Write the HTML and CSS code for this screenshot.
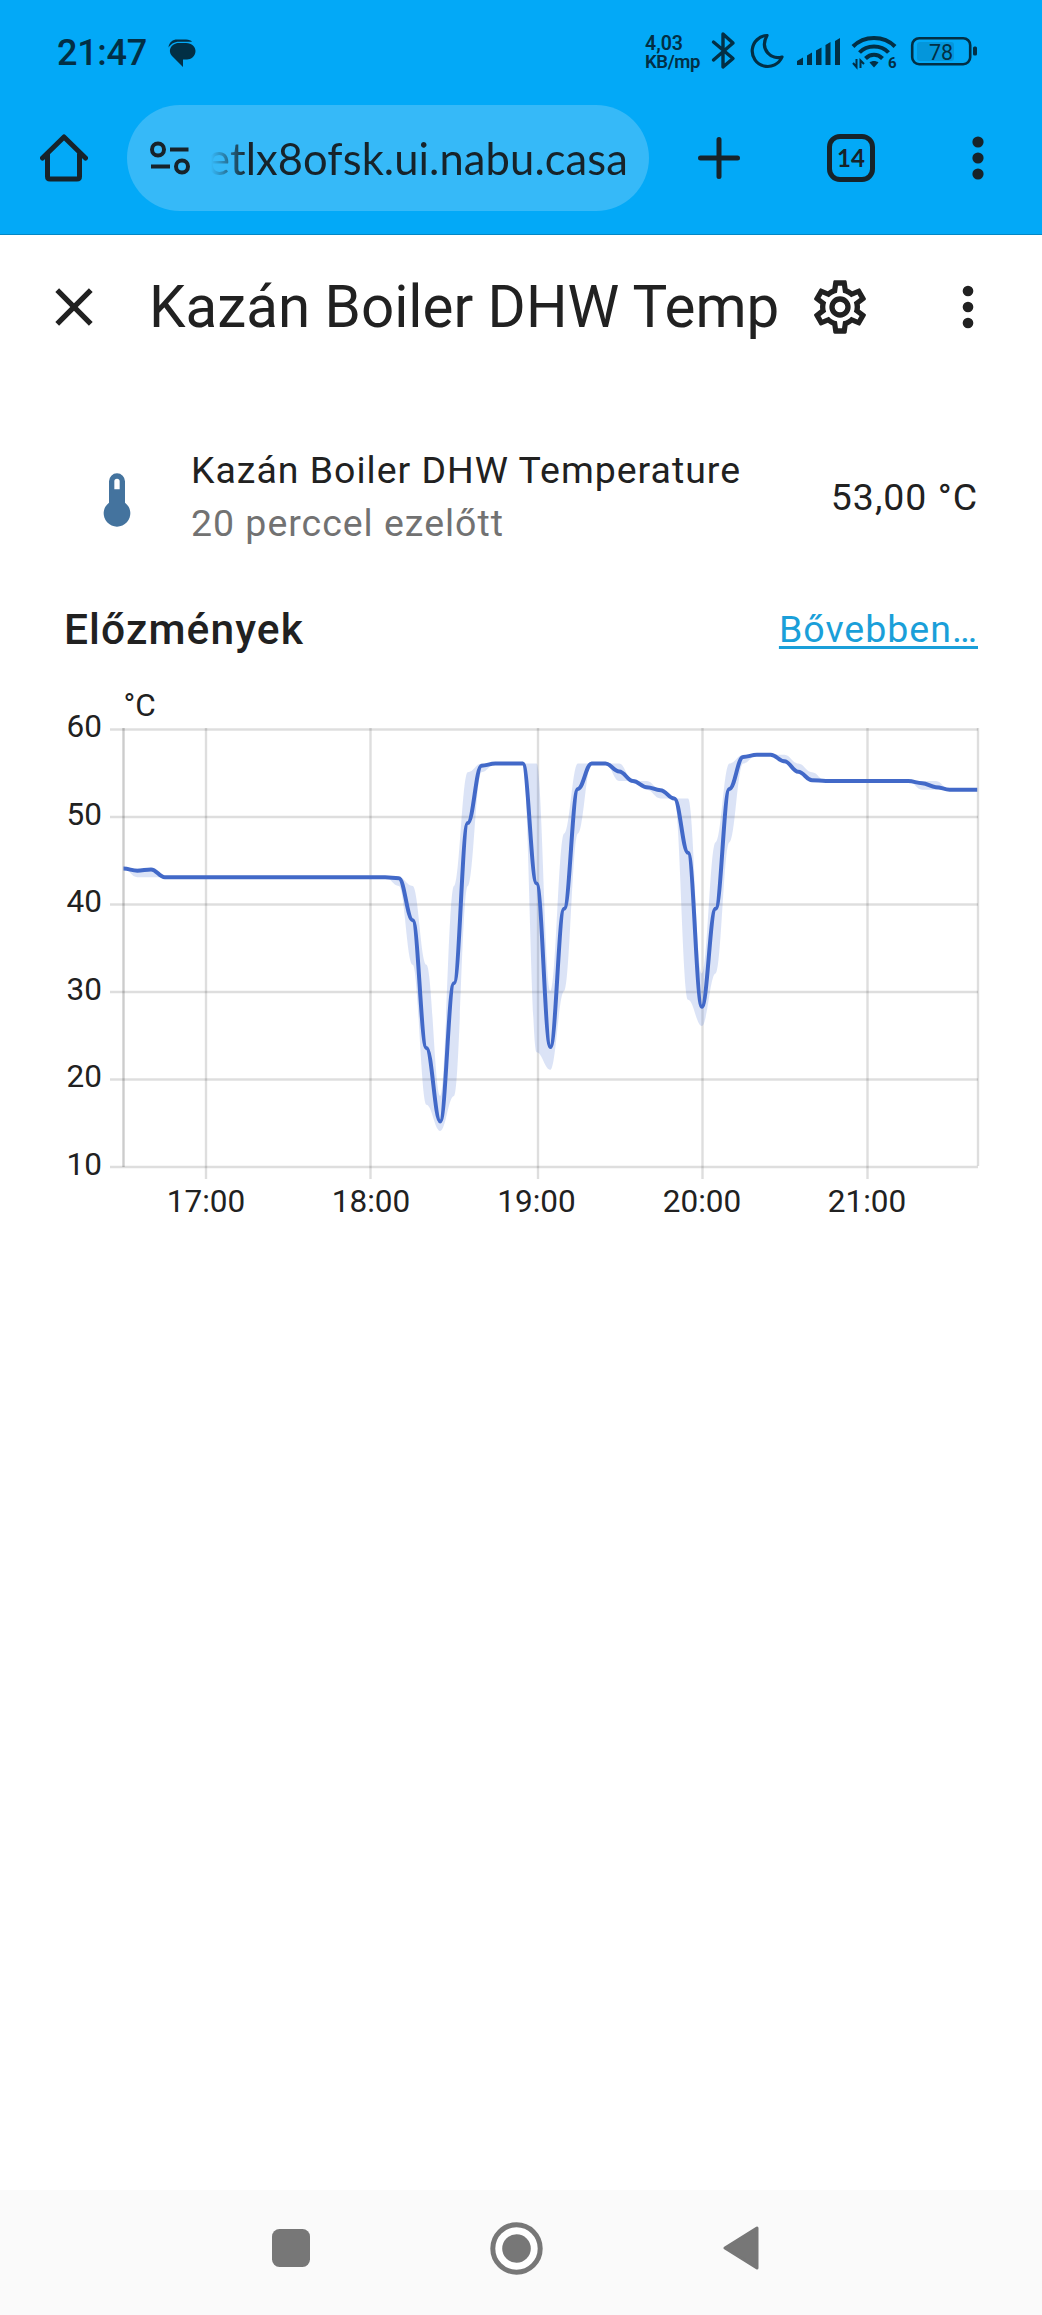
FILE: index.html
```
<!DOCTYPE html>
<html lang="hu">
<head>
    <meta charset="UTF-8">
    <meta name="viewport" content="width=device-width, initial-scale=1.0">
    <title>Kazán Boiler DHW Temperature</title>
    <link rel="stylesheet" href="styles.css">
</head>
<body>
    <div class="browser">
        <div class="status-bar">
            <span class="clock">21:47</span>
            <svg class="chat" width="30" height="30" viewBox="0 0 30 30">
                <path d="M1.500 9.500C2 4 6 1.500 10 1.500H19C22 1.500 24 2.500 25 3.700H12C7 3.700 4 6 1.500 9.500Z"/>
                <path d="M12 5H19C25 5 28.500 9 28.500 13C28.500 18 24 21.500 20 21.500L16 21.500V29L5 18C0 12 5 5 12 5Z"/>
            </svg>
            <div class="status-icons">
                <div class="net-speed">
                    <div class="rate">4,03</div>
                    <div>KB/mp</div>
                </div>
                <svg width="29" height="41" viewBox="711 32 29 41">
                    <path class="stroke" stroke-width="3.4" stroke-linejoin="round" stroke-linecap="round" d="M713.5 42L733 58.500L723 67V34L733 43L713.500 60"/>
                </svg>
                <svg width="36" height="41" viewBox="750 32 36 41">
                    <path class="stroke" stroke-width="3.2" stroke-linejoin="round" d="M767 35.500A15.500 15.500 0 1 0 782 57C772 60 759 50 767 35.500Z"/>
                </svg>
                <svg width="45" height="41" viewBox="796 32 45 41">
                    <path d="M797 65V61L803 57.500V65ZM807 65V55.500L812 52.500V65ZM816 65V50.500L821.500 47.500V65ZM825.500 65V45L830.500 42V65ZM835 65V41L840 38V65Z"/>
                </svg>
                <svg width="49" height="41" viewBox="851 32 49 41">
                    <g class="stroke" stroke-width="4">
                        <path d="M853 46.500C864 35 884 35 895 46.500"/>
                        <path d="M859.500 52.500C867 44.500 881 44.500 888.500 52.500"/>
                        <path d="M865.500 58.500C870.500 53.500 877.500 53.500 882.500 58.500"/>
                    </g>
                    <path d="M869.500 62.500C872 60.500 876 60.500 878.500 62.500L874 67.500Z"/>
                    <path class="stroke" stroke-width="2" d="M856.500 59V67L853 63M860.500 68V60.500L864 64"/>
                    <text class="wifi-gen" x="888" y="68">6</text>
                </svg>
                <svg width="68" height="41" viewBox="910 32 68 41">
                    <rect class="charge" x="917" y="42" width="37" height="19" rx="3"/>
                    <rect class="stroke" stroke-width="2.6" x="912.200" y="38.200" width="58" height="26" rx="7"/>
                    <rect x="973" y="46.500" width="4" height="9" rx="1.500"/>
                    <text class="percent" x="941" y="59.500">78</text>
                </svg>
            </div>
        </div>

        <div class="toolbar">
            <svg class="home" width="48" height="48" viewBox="0 0 48 48">
                <path d="M2.500 24L24 3L45.500 24M7.500 20V42.500Q7.500 45 10 45H37Q39.500 45 39.500 42.500V20"/>
            </svg>
            <div class="url-pill">
                <svg width="40" height="34" viewBox="0 0 40 34">
                    <circle cx="8" cy="8.500" r="6"/>
                    <circle cx="32" cy="25.500" r="6"/>
                    <path d="M20 8.500H38.500M1 25.500H20"/>
                </svg>
                <span class="url">etlx8ofsk.ui.nabu.casa</span>
            </div>
            <svg class="plus" width="42" height="42" viewBox="0 0 42 42">
                <path d="M21 2.500V39.500M2.500 21H39.500"/>
            </svg>
            <span class="tabs">14</span>
            <svg class="menu" width="12" height="44" viewBox="0 0 12 44">
                <circle cx="6" cy="6" r="5.600"/><circle cx="6" cy="22" r="5.600"/><circle cx="6" cy="38" r="5.600"/>
            </svg>
        </div>
    </div>

    <header class="dialog-header">
        <svg class="icon" viewBox="0 0 24 24"><path d="M19,6.41L17.59,5L12,10.59L6.41,5L5,6.41L10.59,12L5,17.59L6.41,19L12,13.41L17.59,19L19,17.59L13.41,12L19,6.41Z"/></svg>
        <h1>Kazán Boiler DHW Temp</h1>
        <svg class="icon" viewBox="0 0 24 24"><path d="M12,8A4,4 0 0,1 16,12A4,4 0 0,1 12,16A4,4 0 0,1 8,12A4,4 0 0,1 12,8M12,10A2,2 0 0,0 10,12A2,2 0 0,0 12,14A2,2 0 0,0 14,12A2,2 0 0,0 12,10M10,22C9.75,22 9.54,21.82 9.5,21.58L9.13,18.93C8.5,18.68 7.96,18.34 7.44,17.94L4.95,18.95C4.73,19.03 4.46,18.95 4.34,18.73L2.34,15.27C2.21,15.05 2.27,14.78 2.46,14.63L4.57,12.97L4.5,12L4.57,11L2.46,9.37C2.27,9.22 2.21,8.95 2.34,8.73L4.34,5.27C4.46,5.05 4.73,4.96 4.95,5.05L7.44,6.05C7.96,5.66 8.5,5.32 9.13,5.07L9.5,2.42C9.54,2.18 9.75,2 10,2H14C14.25,2 14.46,2.18 14.5,2.42L14.87,5.07C15.5,5.32 16.04,5.66 16.56,6.05L19.05,5.05C19.27,4.96 19.54,5.05 19.66,5.27L21.66,8.73C21.79,8.95 21.73,9.22 21.54,9.37L19.43,11L19.5,12L19.43,13L21.54,14.63C21.73,14.78 21.79,15.05 21.66,15.27L19.66,18.73C19.54,18.95 19.27,19.04 19.05,18.95L16.56,17.95C16.04,18.34 15.5,18.68 14.87,18.93L14.5,21.58C14.46,21.82 14.25,22 14,22H10M11.25,4L10.88,6.61C9.68,6.86 8.62,7.5 7.85,8.39L5.44,7.35L4.69,8.65L6.8,10.2C6.4,11.37 6.4,12.64 6.8,13.8L4.68,15.36L5.43,16.66L7.86,15.62C8.63,16.5 9.68,17.14 10.87,17.38L11.24,20H12.76L13.13,17.39C14.32,17.14 15.37,16.5 16.14,15.62L18.57,16.66L19.32,15.36L17.2,13.81C17.6,12.64 17.6,11.37 17.2,10.2L19.31,8.65L18.56,7.35L16.15,8.39C15.38,7.5 14.32,6.86 13.12,6.62L12.75,4H11.25Z"/></svg>
        <svg class="icon dots" viewBox="0 0 24 24"><path d="M12,16A2,2 0 0,1 14,18A2,2 0 0,1 12,20A2,2 0 0,1 10,18A2,2 0 0,1 12,16M12,10A2,2 0 0,1 14,12A2,2 0 0,1 12,14A2,2 0 0,1 10,12A2,2 0 0,1 12,10M12,4A2,2 0 0,1 14,6A2,2 0 0,1 12,8A2,2 0 0,1 10,6A2,2 0 0,1 12,4Z"/></svg>
    </header>

    <main>
        <div class="state-row">
            <svg class="icon thermometer" viewBox="0 0 24 24"><path fill-rule="evenodd" d="M15 13V5A3 3 0 0 0 9 5V13A5 5 0 1 0 15 13M12 4A1 1 0 0 1 13 5V8H11V5A1 1 0 0 1 12 4Z"/></svg>
            <div class="info">
                <div class="name">Kazán Boiler DHW Temperature</div>
                <div class="secondary">20 perccel ezelőtt</div>
            </div>
            <div class="state">53,00 °C</div>
        </div>

        <div class="history-header">
            <h2>Előzmények</h2>
            <a href="#">Bővebben…</a>
        </div>
    </main>

    <svg class="chart" id="chart" width="1042" height="560" viewBox="0 0 1042 560">
        <path class="grid" d="M110 49.500H978M110 137H978M110 224.500H978M110 312H978M110 399.500H978M110 487H978"/>
        <path class="grid" d="M206 48V499M370.500 48V499M538 48V499M702.500 48V499M867.500 48V499M978 48V486"/>
        <path class="axis" d="M123.500 48V487"/>
        <g class="y-labels">
            <text x="102" y="57">60</text>
            <text x="102" y="145">50</text>
            <text x="102" y="232">40</text>
            <text x="102" y="319.500">30</text>
            <text x="102" y="407">20</text>
            <text x="102" y="495">10</text>
        </g>
        <text x="123.500" y="36">°C</text>
        <g class="x-labels">
            <text x="206" y="532">17:00</text>
            <text x="371" y="532">18:00</text>
            <text x="536.500" y="532">19:00</text>
            <text x="702" y="532">20:00</text>
            <text x="867" y="532">21:00</text>
        </g>
        <path class="band" id="band"/>
        <path class="line" id="line"/>
    </svg>

    <nav class="nav-bar">
        <svg width="38" height="38" viewBox="0 0 38 38"><rect width="38" height="38" rx="7.500"/></svg>
        <svg width="53" height="53" viewBox="0 0 53 53">
            <circle class="ring" cx="26.500" cy="26.500" r="23.700"/>
            <circle cx="26.500" cy="26.500" r="14.300"/>
        </svg>
        <svg width="36" height="44" viewBox="0 0 36 44"><path class="back" d="M2 22L34 2V42Z"/></svg>
    </nav>

    <script>
        // 5 minute statistics from 16:30: [index, mean, max, min]
        const data = [
            [0, 44, 44, 44], [1, 43.75, 44, 43], [2, 43.9, 44, 43], [3, 43, 43, 43],
            [19, 43, 43, 43], [20, 42.9, 43, 42], [21, 38.1, 42, 33], [22, 23.5, 33, 17],
            [23, 15.1, 18, 14], [24, 30.9, 42, 18], [25, 49.2, 55, 42], [26, 55.75, 56, 55],
            [27, 56, 56, 56], [29, 56, 56, 56], [30, 42.3, 56, 23], [31, 23.6, 30, 21],
            [32, 39.4, 48, 30], [33, 53.1, 56, 48], [34, 56, 56, 56], [35, 56, 56, 56],
            [36, 55.1, 56, 54], [37, 54, 54, 54], [38, 53.3, 54, 53], [39, 52.95, 53, 52],
            [40, 52, 52, 52], [41, 45.8, 52, 29], [42, 28.2, 32, 26], [43, 39.4, 47, 32],
            [44, 53.1, 56, 47], [45, 56.75, 57, 56], [46, 57, 57, 57], [47, 57, 57, 57],
            [48, 56.25, 57, 56], [49, 55.05, 56, 55], [50, 54.1, 55, 54], [51, 54, 54, 54],
            [57, 54, 54, 54], [58, 53.75, 54, 53], [59, 53.3, 54, 53], [60, 53, 53, 53],
            [62, 53, 53, 53]
        ];

        const points = col => data.map(d => [123.5 + d[0] * 13.77, 486 - (d[col] - 10) * 8.75]);

        function curve(pts) {
            let d = pts[0].join(' ');
            for (let i = 1; i < pts.length; i++) {
                const [x0, y0] = pts[i - 1];
                const [x1, y1] = pts[i];
                const h = (x1 - x0) * 0.4;
                d += ` C${x0 + h} ${y0} ${x1 - h} ${y1} ${x1} ${y1}`;
            }
            return d;
        }

        document.getElementById('line').setAttribute('d', 'M' + curve(points(1)));
        document.getElementById('band').setAttribute('d', 'M' + curve(points(2)) + ' L' + curve(points(3).reverse()) + 'Z');
    </script>
</body>
</html>
```
FILE: styles.css
```
body {
    margin: 0;
    min-height: 2315px;
    display: flex;
    flex-direction: column;
    font-family: Roboto, sans-serif;
    color: #212121;
    background-color: #fff;
}
svg {
    flex: none;
    display: block;
}
.browser {
    height: 234px;
    background-color: #03a9f7;
    border-bottom: 1px solid #0487c5;
}
.status-bar {
    height: 105px;
    display: flex;
    align-items: center;
    padding: 0 64px 0 57px;
    color: #022f45;
    fill: #022f45;
}
.clock {
    font-size: 36px;
    font-weight: 500;
    width: 110px;
    letter-spacing: -0.3px;
}
.status-icons {
    display: flex;
    align-items: center;
    gap: 10px;
    margin-left: auto;
}
.net-speed {
    width: 56px;
    font-size: 18.5px;
    line-height: 18px;
    font-weight: 600;
    letter-spacing: -0.4px;
    white-space: nowrap;
}
.net-speed div {
    height: 18px;
}
.net-speed .rate {
    font-size: 19.5px;
    letter-spacing: 0;
}
.stroke {
    fill: none;
    stroke: #022f45;
}
.wifi-gen {
    font-size: 15px;
    font-weight: 700;
}
.percent {
    font-size: 21.5px;
    text-anchor: middle;
}
.charge {
    fill: #0496db;
}
.toolbar {
    height: 106px;
    display: flex;
    align-items: center;
    padding-left: 40px;
    color: #17232a;
}
.toolbar svg {
    fill: none;
    stroke: #17232a;
    stroke-width: 5;
}
.toolbar .home {
    stroke-linejoin: round;
    stroke-linecap: round;
}
.url-pill {
    box-sizing: border-box;
    width: 522px;
    height: 106px;
    margin-left: 39px;
    padding: 0 21px 0 23px;
    border-radius: 53px;
    background-color: #36b9f8;
    display: flex;
    align-items: center;
    justify-content: space-between;
}
.url-pill svg {
    stroke-width: 4;
}
.url {
    width: 417px;
    height: 60px;
    line-height: 60px;
    display: flex;
    justify-content: flex-end;
    font-family: Lato, sans-serif;
    font-size: 43.5px;
    letter-spacing: 0.1px;
    white-space: nowrap;
    -webkit-mask-image: linear-gradient(to right, transparent, #000 36px);
    mask-image: linear-gradient(to right, transparent, #000 36px);
}
.toolbar .plus {
    margin-left: 49px;
    stroke-linecap: round;
}
.tabs {
    box-sizing: border-box;
    width: 48px;
    height: 48px;
    margin-left: 87px;
    border: 5px solid #17232a;
    border-radius: 13px;
    font: 700 24px/38px Lato, sans-serif;
    text-align: center;
}
.toolbar .menu {
    margin-left: 97px;
    fill: #17232a;
    stroke: none;
}
.icon {
    width: 64px;
    height: 64px;
    fill: #212121;
}
.dialog-header {
    height: 144px;
    display: flex;
    align-items: center;
    padding: 0 42px;
}
.dialog-header h1 {
    width: 659px;
    margin: 0 0 0 43px;
    font-size: 58.3px;
    font-weight: 400;
    white-space: nowrap;
}
.dialog-header .dots {
    margin-left: 64px;
}
main {
    padding: 65px 64px 0;
}
.state-row {
    display: flex;
    align-items: center;
    line-height: 53px;
    font-size: 37.45px;
    letter-spacing: 1px;
}
.thermometer {
    margin: 5px 42px 0 21px;
    fill: #44739e;
}
.info {
    flex: 1;
}
.secondary {
    color: #727272;
}
.history-header {
    display: flex;
    justify-content: space-between;
    align-items: center;
    margin-top: 53px;
    line-height: 53px;
}
.history-header h2 {
    margin: 0;
    font-size: 42.5px;
    font-weight: 500;
    letter-spacing: 1.1px;
}
.history-header a {
    font-size: 37.5px;
    letter-spacing: 1px;
    color: #1a9fd9;
    text-underline-offset: 4px;
    text-decoration-thickness: 2.5px;
}
.chart {
    margin-top: 24px;
    font-size: 31.5px;
    fill: #212121;
}
.grid {
    stroke: rgba(0, 0, 0, 0.13);
    stroke-width: 2.4;
}
.axis {
    stroke: rgba(0, 0, 0, 0.2);
    stroke-width: 2.4;
}
.y-labels {
    text-anchor: end;
}
.x-labels {
    text-anchor: middle;
}
.band {
    fill: rgba(66, 105, 208, 0.19);
}
.line {
    fill: none;
    stroke: #4269c8;
    stroke-width: 4;
    stroke-linejoin: round;
}
.nav-bar {
    box-sizing: border-box;
    height: 125px;
    margin-top: auto;
    padding: 0 283px 9px 272px;
    background-color: #fafafa;
    display: flex;
    align-items: center;
    justify-content: space-between;
    fill: #777;
}
.nav-bar .ring {
    fill: #fff;
    stroke: #777;
    stroke-width: 5;
}
.back {
    stroke: #777;
    stroke-width: 3;
    stroke-linejoin: round;
}
```
